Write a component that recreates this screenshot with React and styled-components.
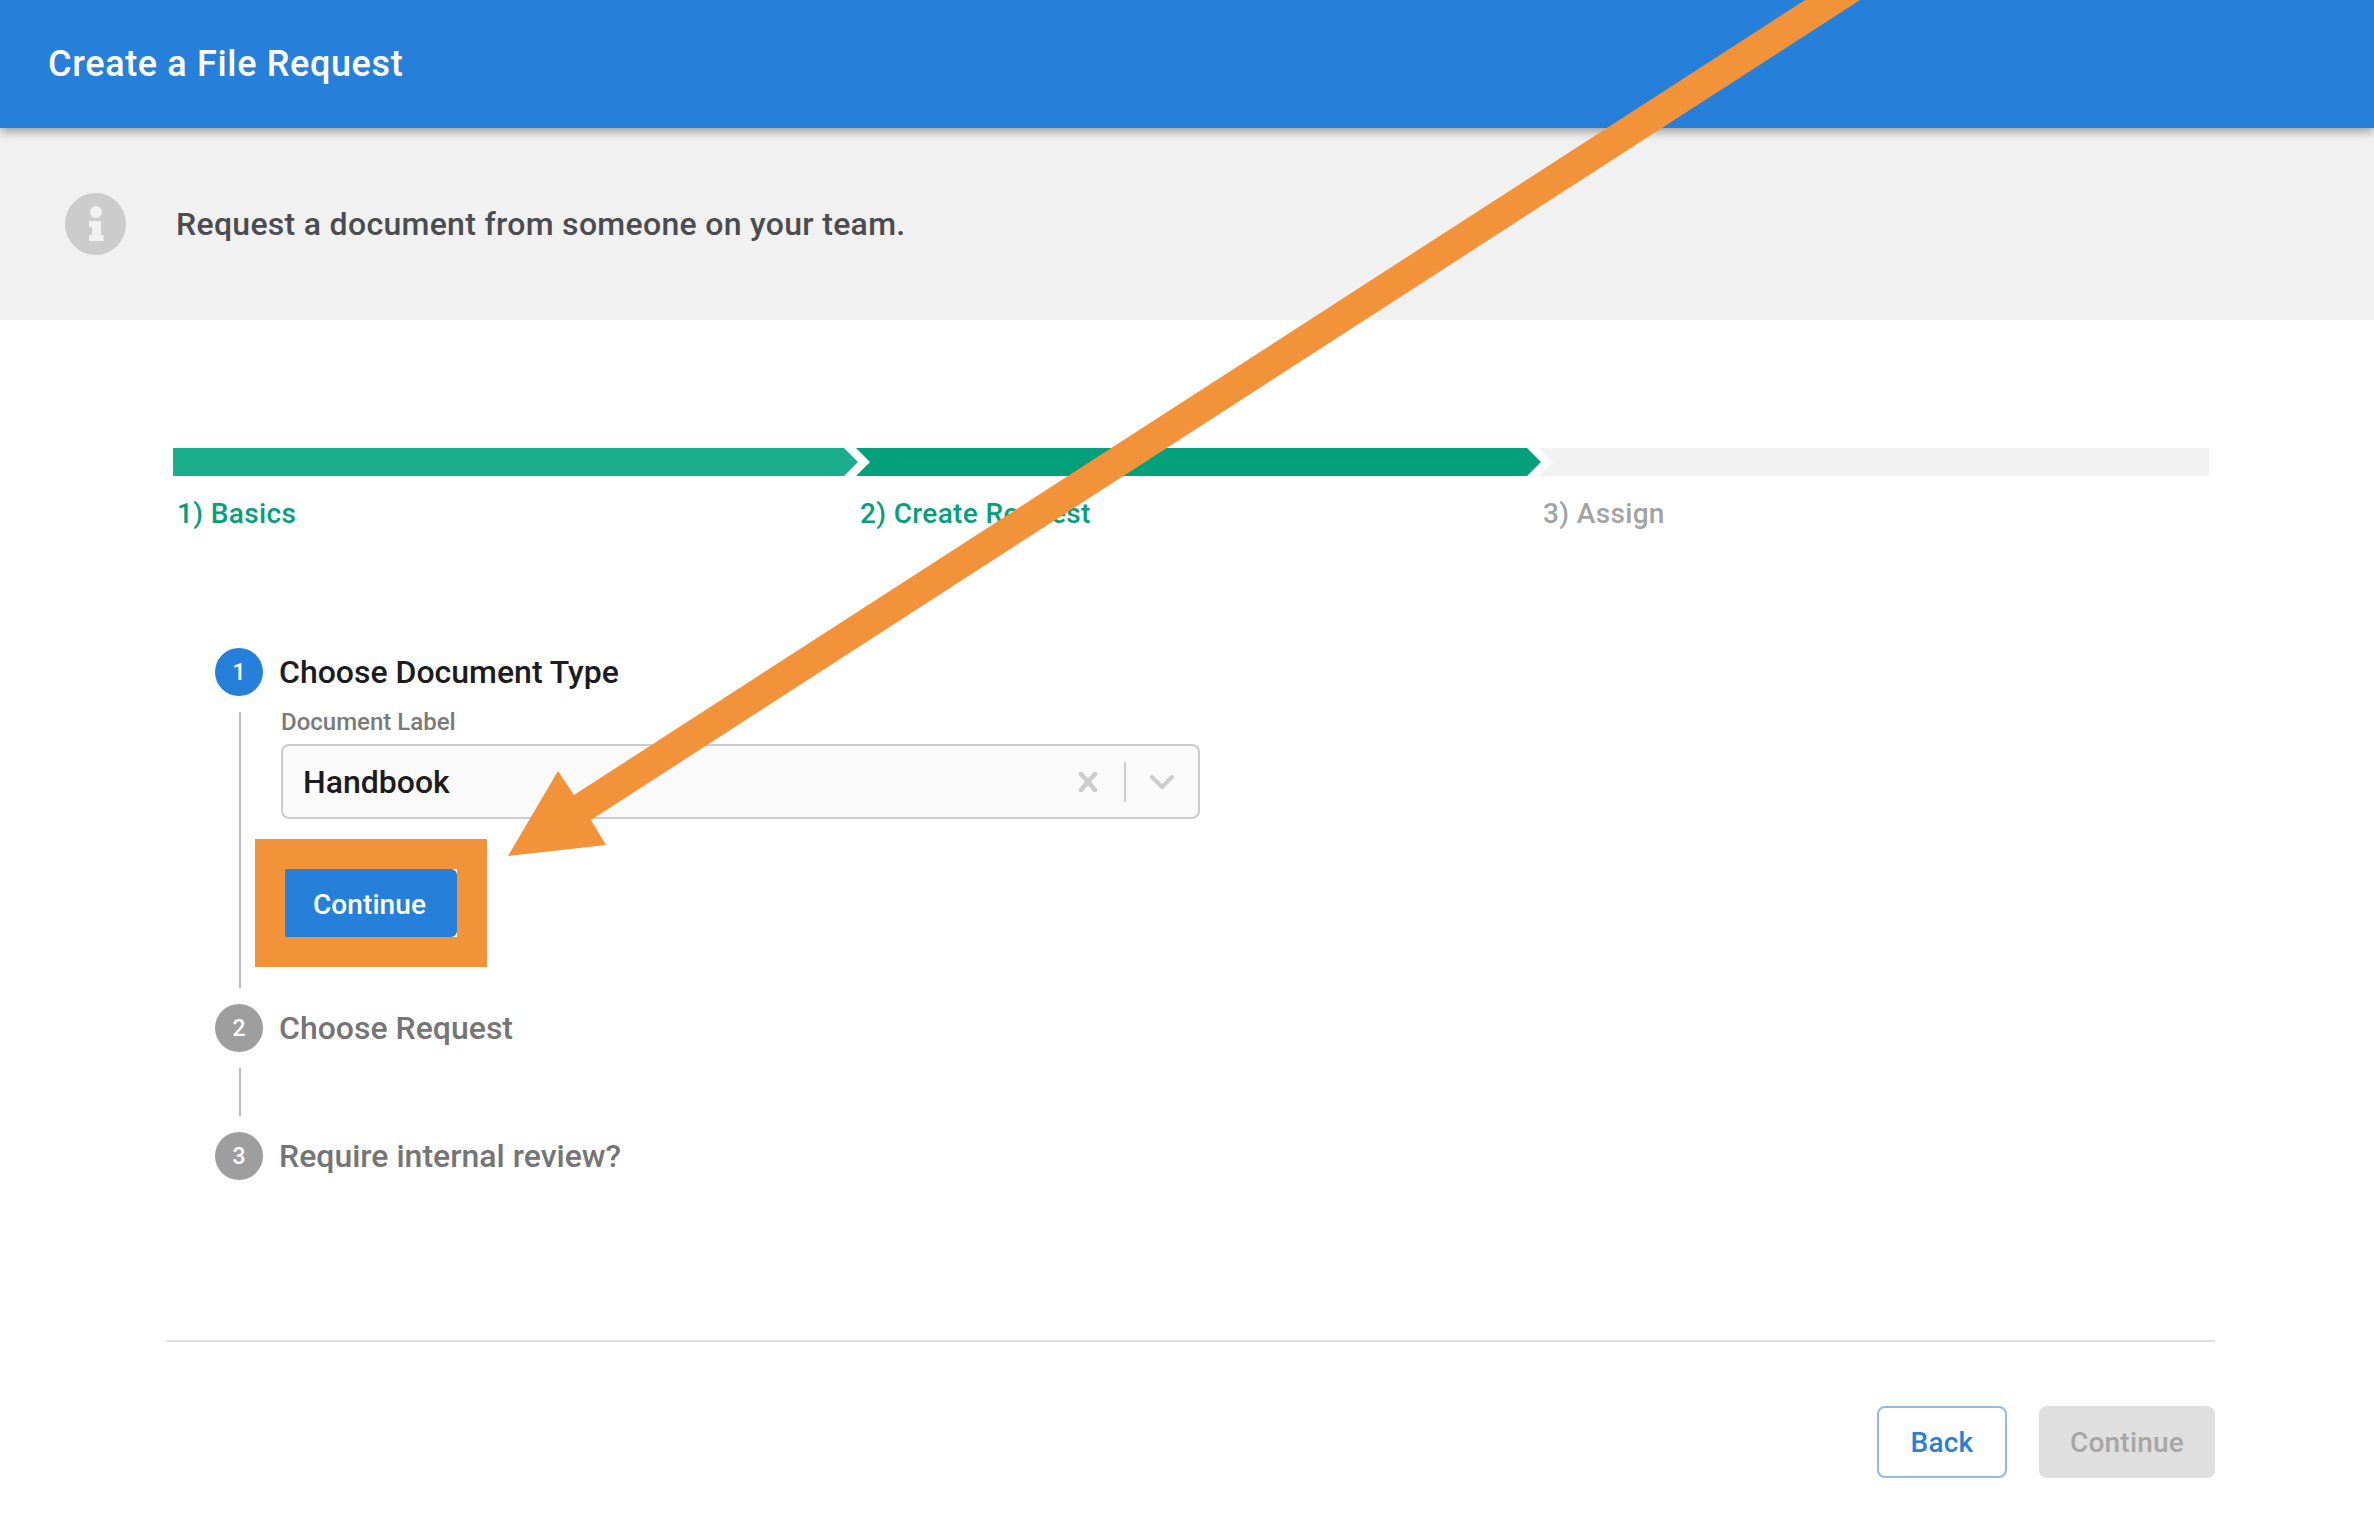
import React from "react";
import styled, { createGlobalStyle } from "styled-components";

const BLUE = "#2680da";
const ORANGE = "#f39339";
const GREEN = "#049f7b";

const GlobalStyle = createGlobalStyle`
  html, body {
    margin: 0;
    padding: 0;
    background: #ffffff;
  }
  body {
    font-family: Roboto, "Liberation Sans", sans-serif;
  }
`;

const Page = styled.div`
  position: relative;
  width: 2374px;
  height: 1518px;
  overflow: hidden;
  background: #ffffff;
`;

// Barra superior
const Header = styled.header`
  position: relative;
  z-index: 1;
  display: flex;
  align-items: center;
  height: 128px;
  padding-left: 48px;
  background: ${BLUE};
  box-shadow: 0 3px 10px rgba(0, 0, 0, 0.4);
`;

const HeaderTitle = styled.h1`
  margin: 0;
  font-size: 36px;
  font-weight: 500;
  letter-spacing: 0.65px;
  color: #ffffff;
`;

const Banner = styled.div`
  display: flex;
  align-items: center;
  gap: 50px;
  height: 192px;
  padding-left: 65px;
  background: #f1f1f1;
`;

const BannerText = styled.p`
  margin: 0;
  font-size: 32px;
  font-weight: 500;
  letter-spacing: 0.3px;
  color: #4c4c50;
`;

// Barra de progreso
const Progress = styled.div`
  display: flex;
  padding: 128px 0 0 173px;
`;

const Segment = styled.div`
  width: ${(p) => p.$width}px;
  margin-left: ${(p) => (p.$first ? 0 : -2)}px;
`;

const SegmentBar = styled.div`
  height: 28px;
  background: ${(p) => p.$color};
  clip-path: ${(p) => p.$shape};
`;

const SegmentLabel = styled.div`
  margin-top: 20px;
  padding-left: 4px;
  font-size: 28px;
  line-height: 35px;
  font-weight: 500;
  letter-spacing: 0.35px;
  color: ${(p) => p.$color};
`;

// Pasos
const Stepper = styled.div`
  margin: 117px 0 0 215px;
`;

const StepHead = styled.div`
  display: flex;
  align-items: center;
  gap: 16px;
  height: 48px;
`;

const StepNumber = styled.span`
  display: flex;
  align-items: center;
  justify-content: center;
  width: 48px;
  height: 48px;
  border-radius: 50%;
  font-size: 23px;
  font-weight: 500;
  color: #ffffff;
  background: ${(p) => (p.$active ? BLUE : "#9e9e9e")};
`;

const StepTitle = styled.span`
  font-size: 32px;
  font-weight: 500;
  color: ${(p) => (p.$active ? "#1c1c1e" : "#757575")};
`;

const StepBody = styled.div`
  min-height: 48px;
  margin: 16px 0 16px 24px;
  padding-left: 40px;
  border-left: 2px solid #bdbdbd;
`;

const FieldLabel = styled.label`
  display: block;
  height: 32px;
  font-size: 24px;
  line-height: 21px;
  font-weight: 500;
  color: #7a7a7a;
`;

const Select = styled.div`
  box-sizing: border-box;
  display: flex;
  align-items: center;
  width: 919px;
  height: 75px;
  padding: 0 24px 0 20px;
  border: 2px solid #cccccc;
  border-radius: 8px;
  background: #fafafa;
`;

const SelectValue = styled.span`
  flex: 1;
  font-size: 32px;
  font-weight: 500;
  color: #1c1c1e;
`;

const SelectDivider = styled.span`
  width: 2px;
  height: 40px;
  margin: 0 24px 0 26px;
  background: #cccccc;
`;

const ButtonSlot = styled.div`
  position: relative;
  width: 172px;
  margin: 50px 0 0 4px;
  padding-bottom: 51px;
`;

const PrimaryButton = styled.button`
  display: block;
  box-sizing: border-box;
  width: 172px;
  height: 68px;
  padding: 2px 3px 0 0;
  border: none;
  border-radius: 1px 6px 6px 1px;
  font-family: inherit;
  font-size: 28px;
  font-weight: 500;
  letter-spacing: 0.1px;
  color: #ffffff;
  background: ${BLUE};
`;

// Marco naranja de la anotación
const Highlight = styled.div`
  position: absolute;
  top: -30px;
  left: -30px;
  width: 172px;
  height: 68px;
  border: 30px solid ${ORANGE};
  pointer-events: none;
`;

const Footer = styled.footer`
  display: flex;
  justify-content: flex-end;
  gap: 32px;
  margin: 160px 159px 0 167px;
  padding-top: 64px;
  border-top: 2px solid #dedede;
`;

const FooterButton = styled.button`
  box-sizing: border-box;
  width: ${(p) => p.$width}px;
  height: 72px;
  padding: 0;
  border-radius: 8px;
  font-family: inherit;
  font-size: 28px;
  font-weight: 500;
  letter-spacing: 0.2px;
  color: ${(p) => (p.disabled ? "#a6a6a6" : "#2c7ed2")};
  background: ${(p) => (p.disabled ? "#dfdfdf" : "#ffffff")};
  border: ${(p) => (p.disabled ? "none" : "2px solid #90b9e6")};
`;

const ArrowLayer = styled.svg`
  position: absolute;
  top: 0;
  left: 0;
  z-index: 2;
  pointer-events: none;
`;

const InfoIcon = () => (
  <svg width="61" height="62" viewBox="0 0 61 62" style={{ flex: "none" }}>
    <ellipse cx="30.5" cy="31" rx="30.5" ry="31" fill="#cccccc" />
    <circle cx="31" cy="19" r="6" fill="#f1f1f1" />
    <path d="M24 28h12v14h2.500v6H24v-6h3v-8h-3z" fill="#f1f1f1" />
  </svg>
);

const ClearIcon = () => (
  <svg width="20" height="20" viewBox="0 0 20 20">
    <path d="M3 2l14 16M17 2L3 18" stroke="#cccccc" strokeWidth="4.500" strokeLinecap="round" fill="none" />
  </svg>
);

const ChevronIcon = () => (
  <svg width="24" height="16" viewBox="0 0 24 16">
    <path d="M2 3l10 10L22 3" stroke="#cccccc" strokeWidth="4" strokeLinecap="round" strokeLinejoin="round" fill="none" />
  </svg>
);

const App = () => (
  <Page>
    <GlobalStyle />
    <Header>
      <HeaderTitle>Create a File Request</HeaderTitle>
    </Header>
    <Banner>
      <InfoIcon />
      <BannerText>Request a document from someone on your team.</BannerText>
    </Banner>

    <Progress>
      <Segment $first $width={685}>
        <SegmentBar
          $color="#1bae8c"
          $shape="polygon(0 0, 671px 0, 100% 50%, 671px 100%, 0 100%)"
        />
        <SegmentLabel $color={GREEN}>1) Basics</SegmentLabel>
      </Segment>
      <Segment $width={685}>
        <SegmentBar
          $color={GREEN}
          $shape="polygon(0 0, 671px 0, 100% 50%, 671px 100%, 0 100%, 14px 50%)"
        />
        <SegmentLabel $color={GREEN}>2) Create Request</SegmentLabel>
      </Segment>
      <Segment $width={670}>
        <SegmentBar $color="#f2f2f2" $shape="polygon(0 0, 100% 0, 100% 100%, 0 100%, 14px 50%)" />
        <SegmentLabel $color="#a3a3a3">3) Assign</SegmentLabel>
      </Segment>
    </Progress>

    <Stepper>
      <StepHead>
        <StepNumber $active>1</StepNumber>
        <StepTitle $active>Choose Document Type</StepTitle>
      </StepHead>
      <StepBody>
        <FieldLabel>Document Label</FieldLabel>
        <Select>
          <SelectValue>Handbook</SelectValue>
          <ClearIcon />
          <SelectDivider />
          <ChevronIcon />
        </Select>
        <ButtonSlot>
          <PrimaryButton>Continue</PrimaryButton>
          <Highlight />
        </ButtonSlot>
      </StepBody>
      <StepHead>
        <StepNumber>2</StepNumber>
        <StepTitle>Choose Request</StepTitle>
      </StepHead>
      <StepBody />
      <StepHead>
        <StepNumber>3</StepNumber>
        <StepTitle>Require internal review?</StepTitle>
      </StepHead>
    </Stepper>

    <Footer>
      <FooterButton $width={130}>Back</FooterButton>
      <FooterButton $width={176} disabled>Continue</FooterButton>
    </Footer>

    {/* Flecha naranja de la anotación */}
    <ArrowLayer width="2374" height="1518" viewBox="0 0 2374 1518">
      <polygon points="1805,0 1860,0 591,820 606,845 508,856 558,771 574,795" fill={ORANGE} />
    </ArrowLayer>
  </Page>
);

export default App;
